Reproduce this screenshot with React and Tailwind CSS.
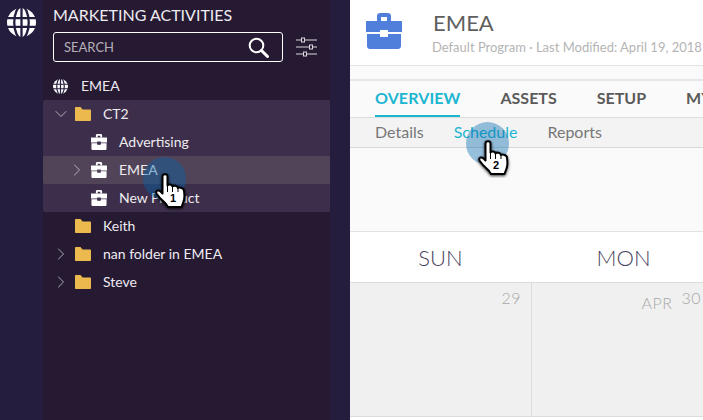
import { ChevronDown, ChevronRight } from 'lucide-react'

function Globe({ size }) {
  return (
    <svg width={size} height={size} viewBox="0 0 30 30" className="shrink-0">
      <circle cx="15" cy="15" r="15" fill="#fff" />
      <g fill="none" stroke="#251d3d" strokeWidth="2.4">
        <path d="M0 10.5H30M0 19.5H30M15 0V30" />
        <ellipse cx="15" cy="15" rx="7.5" ry="16.5" />
      </g>
    </svg>
  )
}

function Folder() {
  return (
    <svg width="16" height="14" viewBox="0 0 16 14" className="shrink-0">
      <path d="M0 1C0 .4.4 0 1 0H5.5L7.5 2.5H15C15.6 2.5 16 2.9 16 3.5V13C16 13.6 15.6 14 15 14H1C.4 14 0 13.6 0 13Z" fill="#ecb94f" />
    </svg>
  )
}

function Case({ size = 16, color = '#fff', cut = '#3d2f4b' }) {
  return (
    <svg width={size} height={size} viewBox="0 0 36 36" className="shrink-0">
      <path d="M11 8V3C11 1.3 12.3 0 14 0H22C23.7 0 25 1.3 25 3V8H21V4H15V8Z" fill={color} />
      <path d="M1 8H35C35.6 8 36 8.4 36 9V19H22V17H14V19H0V9C0 8.4.4 8 1 8Z" fill={color} />
      <path d="M1 21H14V24H22V21H35V33C35 34.7 33.7 36 32 36H4C2.3 36 1 34.7 1 33Z" fill={color} />
      <rect x="15" y="18" width="6" height="5" fill={cut} />
    </svg>
  )
}

// hand pointer with its step number
function Pointer({ n, className }) {
  return (
    <svg width="36" height="40" viewBox="0 0 36 40" className={className}>
      <defs>
        <filter id={`s${n}`} x="-30%" y="-30%" width="160%" height="160%">
          <feDropShadow dx="0" dy="1" stdDeviation="1.4" floodColor="#000" floodOpacity="0.8" />
        </filter>
      </defs>
      <path
        d="M9.5 5.5C9.5 2.5 14.5 2.5 14.5 5.5V14.5C15.5 13 19 13.2 19.5 15.5C20.5 14 24.5 14.5 25 17C26.5 16 31 17 31 20C31.5 24 32 27 30.5 30.5L28.5 36H15L13 33C10.5 30 7 28 3.5 22.5C2.2 19.5 5.5 18.5 7.5 20.5L9.5 22.5Z"
        fill="#fff"
        stroke="#000"
        strokeWidth="2"
        strokeLinejoin="round"
        filter={`url(#s${n})`}
      />
      <path d="M14.5 14.5V21M19.5 15.5V21M25 17V21" stroke="#000" strokeWidth="1" fill="none" />
      <text x="20" y="31" textAnchor="middle" fontSize="11" fontWeight="700" fill="#000" fontFamily="Liberation Sans, sans-serif">{n}</text>
    </svg>
  )
}

function Row({ nested, chevron, icon, label, active }) {
  return (
    <div className={`flex h-7 items-center ${active ? 'rounded-l-[2px] bg-[#524458]' : ''}`}>
      <span className={`flex w-[32px] shrink-0 justify-end pr-[4px] ${nested ? 'ml-4' : ''}`}>
        {chevron === 'down' && <ChevronDown size={20} strokeWidth={1} color="#c9c4cd" />}
        {chevron === 'right' && <ChevronRight size={20} strokeWidth={1} color="#c9c4cd" />}
      </span>
      {icon}
      <span className="ml-[12px] whitespace-nowrap pb-[2px] text-[14px] text-[#eeebf0]">{label}</span>
    </div>
  )
}

function Tree() {
  return (
    <div className="mt-[10px]">
      <div className="flex h-7 items-center pl-[10px]">
        <Globe size={15} />
        <span className="ml-[13px] pb-[2px] text-[14px] text-[#eeebf0]">EMEA</span>
      </div>
      <div className="rounded-l-[2px] bg-[#3d2f4b]">
        <Row chevron="down" icon={<Folder />} label="CT2" />
        <Row nested icon={<Case />} label="Advertising" />
        <Row nested chevron="right" icon={<Case cut="#524458" />} label="EMEA" active />
        <Row nested icon={<Case />} label="New Product" />
      </div>
      <Row icon={<Folder />} label="Keith" />
      <Row chevron="right" icon={<Folder />} label="nan folder in EMEA" />
      <Row chevron="right" icon={<Folder />} label="Steve" />
    </div>
  )
}

function Sidebar() {
  return (
    <div className="flex w-[350px] shrink-0 bg-[#251d3d]">
      <div className="w-[43px] shrink-0 pl-[7px] pt-[8px]">
        <Globe size={29} />
      </div>
      <div className="w-[287px] shrink-0 bg-[#261a33]">
        <div className="pl-[10px] pt-[5px]">
          <div className="text-[16px] leading-[20px] text-[#eeebf0]">MARKETING ACTIVITIES</div>
          <div className="mt-[7px] flex items-center">
            <div className="flex h-[30px] w-[230px] items-center justify-between rounded-[3px] border border-white pl-[10px] pr-[13px]">
              <span className="pt-[2px] text-[13px] text-[#b5b0ba]">SEARCH</span>
              <svg width="21" height="21" viewBox="0 0 21 21" fill="none" stroke="#fff">
                <circle cx="8.5" cy="8.5" r="6.8" strokeWidth="2" />
                <path d="M13.5 13.5L19.5 19.5" strokeWidth="3" strokeLinecap="round" />
              </svg>
            </div>
            <svg width="22" height="20" viewBox="0 0 22 20" className="ml-[13px]" stroke="#d9d6dc" fill="#261a33">
              <path d="M0 3H21M0 10H21M0 17H21" strokeWidth="1.2" />
              <rect x="5.5" y="1" width="3" height="4" />
              <rect x="13.5" y="8" width="3" height="4" />
              <rect x="7.5" y="15" width="3" height="4" />
            </svg>
          </div>
        </div>
        <Tree />
      </div>
    </div>
  )
}

function DayCell({ children, border }) {
  return (
    <div className={`flex h-full w-[181px] shrink-0 justify-end ${border ? 'border-l border-[#dcdcdc]' : ''}`}>{children}</div>
  )
}

function Main() {
  return (
    <div className="flex min-w-0 flex-1 flex-col overflow-hidden bg-white">
      <div className="flex h-[66px] shrink-0 items-start border-b border-[#e4e4e4] bg-white">
        <div className="ml-[16px] mt-[13px]">
          <Case size={36} color="#4f7edb" cut="#fff" />
        </div>
        <div className="ml-[31px] mt-[9px] min-w-0 whitespace-nowrap">
          <div className="text-[22px] leading-[28px] text-[#5f5f5f]">EMEA</div>
          <div className="-ml-px mt-[2px] text-[13px] leading-[16px] text-[#b4b4b4]">Default Program · Last Modified: April 19, 2018</div>
        </div>
      </div>
      <div className="h-[15px] shrink-0 border-b-2 border-[#e6e5ea] bg-[#fafafa]" />
      <div className="flex h-[37px] shrink-0 gap-[40px] whitespace-nowrap border-b border-[#dedede] bg-[#fafafa] pl-[25px] text-[16px] font-bold">
        <div className="flex h-[36px] items-center border-b-2 border-[#1cb6d1] tracking-[0.1px] text-[#1cb6d1]">OVERVIEW</div>
        <div className="flex h-[34px] items-center text-[#5a5a5a]">ASSETS</div>
        <div className="flex h-[34px] items-center text-[#5a5a5a]">SETUP</div>
        <div className="flex h-[34px] items-center text-[#5a5a5a]">MY TOKENS</div>
      </div>
      <div className="flex h-[30px] shrink-0 items-center gap-[30px] border-b border-[#d8d8d8] bg-[#f3f3f3] pb-[2px] pl-[25px] text-[16px] text-[#777]">
        <span>Details</span>
        <span className="text-[#1cb6d1]">Schedule</span>
        <span>Reports</span>
      </div>
      <div className="h-[84px] shrink-0 border-b border-[#e2e2e2] bg-[#fafafa]" />
      <div className="flex h-[51px] shrink-0 border-b border-[#dcdcdc] bg-white text-[22px] font-light text-[#4a4560]">
        <div className="flex w-[181px] shrink-0 items-center justify-center">SUN</div>
        <div className="flex w-[185px] shrink-0 items-center justify-center">MON</div>
      </div>
      <div className="flex h-[134px] shrink-0 border-b border-[#dcdcdc] bg-[#f0f0f0] text-[16px] font-light leading-[20px] tracking-[0.5px] text-[#a8a8a8]">
        <DayCell>
          <span className="mr-[10px] mt-[5px]">29</span>
        </DayCell>
        <DayCell border>
          <span className="mt-[10px]">APR</span>
          <span className="ml-[9px] mr-[11px] mt-[5px]">30</span>
        </DayCell>
      </div>
    </div>
  )
}

export default function App() {
  return (
    <div className="relative flex h-[420px] w-[703px] overflow-hidden font-['Lato',sans-serif]">
      <Sidebar />
      <Main />
      <div className="absolute left-[143px] top-[157px] h-[43px] w-[43px] rounded-full bg-[rgba(0,102,175,0.4)]" />
      <Pointer n={1} className="absolute left-[153px] top-[171px]" />
      <div className="absolute left-[466px] top-[122px] h-[43px] w-[43px] rounded-full bg-[rgba(0,102,175,0.4)]" />
      <Pointer n={2} className="absolute left-[476px] top-[138px]" />
    </div>
  )
}
